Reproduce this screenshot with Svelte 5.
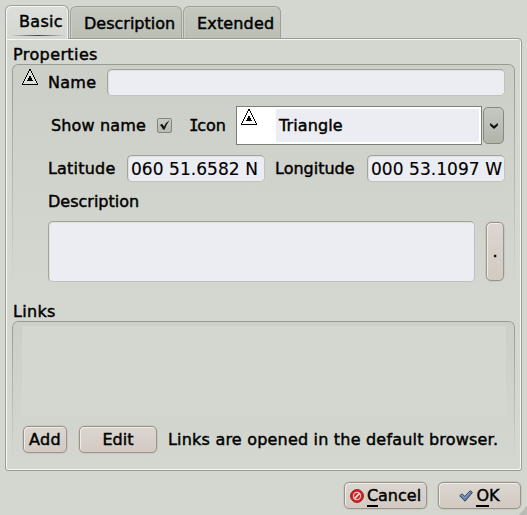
<script>
  const tabs = ['Basic', 'Description', 'Extended'];
  let active = $state('Basic');
  let showName = $state(true);
</script>

{#snippet triangle()}
  <svg class="triangle" width="16" height="16" viewBox="0 0 16 16" shape-rendering="crispEdges">
    <path d="M8 .5 .5 15.5h15Z" fill="#fff" fill-opacity=".35" />
    <path d="M7.5 0v2M8.5 0v2M6.5 2v2M9.5 2v2M5.5 4v2M10.5 4v2M4.5 6v2M11.5 6v2M3.5 8v2M12.5 8v2M2.5 10v2M13.5 10v2M1.5 12v2M14.5 12v2M.5 14v1M15.5 14v1M0 15.5h16" stroke="#000" fill="none" />
    <path d="M7 7h2v2h1v2h1v1H5v-1h1V9h1z" fill="#000" />
  </svg>
{/snippet}

<main>
  <nav>
    {#each tabs as tab}
      <button class={['tab', tab.toLowerCase(), { active: active === tab }]} onclick={() => (active = tab)}><span>{tab}</span></button>
    {/each}
  </nav>
  <section class="pane">
    <h2 class="t-prop">Properties</h2>
    <div class="group props">
      <div class="row name">
        {@render triangle()}
        <span class="label t-name">Name</span>
        <div class="field"></div>
      </div>
      <div class="row show">
        <span class="label t-show">Show name</span>
        <button class="check" aria-label="Show name" onclick={() => (showName = !showName)}>
          {#if showName}
            <svg width="10" height="11" viewBox="0 0 10 11"><path d="M0 5 2 3.8 4 6.6Q6 2 9.5 .2 6 5 4.7 9.6H3Q2 7 0 5Z" fill="#111" /></svg>
          {/if}
        </button>
        <span class="label t-icon"><span class="cap">I</span>con</span>
        <div class="combo">
          {@render triangle()}
          <div class="choice"><span class="t-tri">Triangle</span></div>
        </div>
        <button class="drop" aria-label="Choose icon">
          <svg width="8" height="6" viewBox="0 0 8 6"><path d="M.5.5 4 3.4 7.5.5V2.5L4 5.6.5 2.5Z" fill="#000" stroke="#000" stroke-width=".6" /></svg>
        </button>
      </div>
      <div class="row coords">
        <span class="label t-lat">Latitude</span>
        <div class="field value"><span>060 51.6582 N</span></div>
        <span class="label t-lon">Longitude</span>
        <div class="field value"><span>000 53.1097 W</span></div>
      </div>
      <div class="label desc-label">Description</div>
      <div class="row desc">
        <div class="field area"></div>
        <button class="btn more">.</button>
      </div>
    </div>
    <h2 class="links-title">Links</h2>
    <div class="group links">
      <div class="list"></div>
      <div class="row actions">
        <button class="btn add"><span>Add</span></button>
        <button class="btn edit"><span>Edit</span></button>
        <span class="label t-note">Links are opened in the default browser.</span>
      </div>
    </div>
  </section>
  <footer>
    <button class="btn">
      <svg width="14" height="14" viewBox="0 0 14 14">
        <circle cx="7" cy="7" r="6.4" fill="#cf2528" stroke="#9b1518" />
        <circle cx="7" cy="7" r="3.6" fill="#c5282b" stroke="#e9c3c0" stroke-width="1.1" />
        <path d="m4.2 9.8 5.6-5.6" stroke="#f0d9d6" stroke-width="1.7" />
      </svg>
      <span class="t-cancel"><u>C</u>ancel</span>
    </button>
    <button class="btn ok">
      <svg width="14" height="12" viewBox="0 0 14 12"><path d="M.7 5.8 3 3.9 5.8 6.4 11.3.7 13.4 2.5 6 11.2Z" fill="#6685ad" stroke="#30445f" stroke-linejoin="round" /><path d="m2 5.7 1-.6 2.8 2.6L11.3 2" fill="none" stroke="#91a9c7" stroke-width=".8" /></svg>
      <span class="t-ok"><u>O</u>K</span>
    </button>
  </footer>
  <i class="grip"></i>
</main>

<style>
  :global(body) { margin: 0; }
  main {
    position: relative; box-sizing: border-box; width: 527px; height: 515px; padding: 5px 5px 0;
    overflow: hidden; background: #d4d7d0; color: #000;
    font: 16px/20px 'DejaVu Sans', sans-serif; -webkit-text-stroke: .45px #000;
  }
  main * { box-sizing: border-box; }
  button { margin: 0; padding: 0; font: inherit; color: inherit; }
  span { white-space: pre; }
  nav { display: flex; align-items: flex-end; height: 33px; }
  .tab {
    height: 32px; border: 1px solid #9da196; border-bottom: 0; border-radius: 6px 6px 0 0;
    background: linear-gradient(#c3c7be, #bbbfb4); text-align: left; padding: 3px 0 0 13px; margin-right: 1px;
    box-shadow: inset 1px 1px #cbcec6;
  }
  .basic { width: 64px; letter-spacing: .3px; }
  .description { width: 112px; }
  .extended { width: 98px; letter-spacing: .15px; }
  .tab.active {
    position: relative; z-index: 1; height: 34px; margin-bottom: -1px; padding-top: 0; padding-bottom: 1px;
    background: linear-gradient(#dcdfd9, #d4d7d0); box-shadow: inset 1px 1px #f7f8f4, inset -1px 0 #f0f1ed;
  }
  .tab.active::after {
    content: ''; position: absolute; left: 5px; right: 3px; bottom: 3px; height: 1px;
    background: linear-gradient(90deg, transparent, #444, transparent);
  }
  .pane {
    width: 517px; height: 433px; padding: 6px 6px 0; border: 1px solid #989c91; border-radius: 0 4px 3px 3px;
    box-shadow: inset 1px 1px #f7f8f4, inset -1px -1px #f7f8f4;
  }
  h2 { margin: 0 0 0 1px; height: 19px; font: inherit; }
  .t-prop { letter-spacing: .4px; }
  .group { position: relative; width: 503px; border-radius: 6px 6px 0 0; background: linear-gradient(#cccfc7, #d4d7d0); }
  .group::before {
    content: ''; position: absolute; inset: 0; border: 1px solid #979b90; border-bottom: 0; border-radius: 6px 6px 0 0;
    -webkit-mask-image: linear-gradient(#000, transparent); mask-image: linear-gradient(#000, transparent); pointer-events: none;
  }
  .row { display: flex; align-items: center; }
  .props { height: 222px; padding: 5px 10px 0 10px; }
  .label { flex: none; }
  .field { height: 27px; border: 1px solid #a0a499; border-bottom-color: #c0c3ba; border-right-color: #bfc2b9; border-radius: 5px; background: #ecedf2; box-shadow: inset 1px 1px #dedfe1; }
  .name .triangle { align-self: flex-start; margin-right: 10px; }
  .t-name { width: 59px; letter-spacing: .3px; }
  .name .field { flex: 1; }
  .show { height: 39px; margin-top: 10px; padding-left: 29px; }
  .t-show { width: 106px; letter-spacing: .15px; }
  .check { display: flex; align-items: center; justify-content: center; width: 15px; height: 15px; border: 1px solid #81857b; border-radius: 2px; background: linear-gradient(#c9ccc4, #b5b9af); }
  .t-icon { width: 47px; margin-left: 17px; }
  .cap { font-family: 'DejaVu Sans Mono', monospace; letter-spacing: -1.5px; }
  .combo { display: flex; width: 246px; height: 39px; padding: 2px; border: 1px solid #7c8077; background: #fff; }
  .combo .triangle { margin: 0 19px 0 2px; }
  .choice { flex: 1; padding: 7px 0 0 3px; background: #ecedf2; letter-spacing: .1px; }
  .drop { display: flex; align-items: center; justify-content: center; width: 21px; height: 37px; margin-left: 1px; border: 1px solid #858980; border-radius: 5px; background: linear-gradient(#c5c8c0, #b0b4a9); }
  .coords { margin: 10px 0 0 26px; }
  .t-lat { width: 79px; letter-spacing: .2px; }
  .t-lon { width: 92px; margin-left: 10px; }
  .value { width: 138px; padding: 3px 0 0 3px; font-size: 17px; letter-spacing: .05px; -webkit-text-stroke-width: .15px; }
  .desc-label { height: 30px; margin: 10px 0 0 26px; }
  .desc { margin: -1px 0 0 26px; }
  .area { width: 427px; height: 61px; }
  .btn { display: flex; align-items: center; justify-content: center; height: 27px; border: 1px solid #9b9589; border-radius: 5px; background: linear-gradient(#dcd6d0, #d2cac3); box-shadow: inset 1px 1px #f0ede9, 0 0 0 .5px #bbb7ae; }
  .more { width: 18px; height: 59px; margin-left: 11px; }
  .links-title { margin-top: 15px; padding-top: 1px; height: 20px; letter-spacing: .3px; }
  .links { height: 140px; padding: 5px 9px 0 10px; }
  .list { height: 90px; background: #d4d7d0; }
  .actions { margin-top: 10px; padding-left: 1px; }
  .add { width: 44px; margin-right: 12px; letter-spacing: .3px; }
  .edit { width: 78px; margin-right: 11px; }
  .t-note { letter-spacing: .2px; }
  footer { display: flex; justify-content: flex-end; gap: 11px; padding: 11px 1px 0 0; }
  footer .btn { width: 83px; gap: 3px; }
  footer u { text-decoration: none; border-bottom: 2px solid #000; }
  footer span { line-height: 17px; }
  .grip { position: absolute; right: 0; bottom: 0; width: 9px; height: 9px; background: linear-gradient(135deg, transparent 50%, #b9bcb3 50%); }
</style>
